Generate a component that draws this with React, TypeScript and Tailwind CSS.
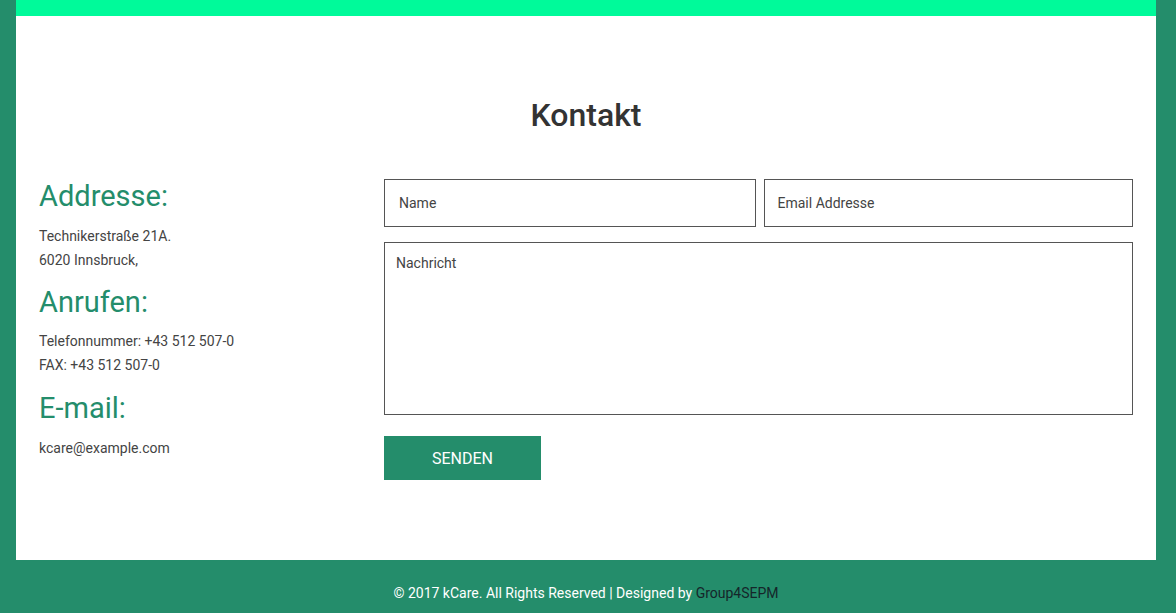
export default function App() {
  return (
    <div className="min-h-[613px] bg-[#248d6b] font-['Roboto',sans-serif] pl-4 pr-5">
      <div className="bg-white h-[560px]">
        <div className="h-4 bg-[#00fa9a]" />
        <h2 className="text-center text-[32px] font-medium text-[#333] pt-[79px] leading-[40px]">Kontakt</h2>
        <div className="flex px-[23px] pt-[43px]">
          {/* Kontaktdaten */}
          <div className="w-[345px] text-[#444] text-[14px] leading-[24px]">
            <h3 className="text-[29px] leading-[36px] text-[#248d6b] mb-[10px]">Addresse:</h3>
            <p>Technikerstraße 21A.</p>
            <p>6020 Innsbruck,</p>
            <h3 className="text-[29px] leading-[36px] text-[#248d6b] mt-[12px] mb-[9px]">Anrufen:</h3>
            <p>Telefonnummer: +43 512 507-0</p>
            <p>FAX: +43 512 507-0</p>
            <h3 className="text-[29px] leading-[36px] text-[#248d6b] mt-[13px] mb-[10px]">E-mail:</h3>
            <p>kcare@example.com</p>
          </div>
          {/* Formular */}
          <form className="flex-1 flex flex-col mt-[1px]">
            <div className="flex gap-[8px]">
              <input
                type="text"
                placeholder="Name"
                className="flex-1 h-[48px] border border-[#555] px-[14px] text-[14px] text-[#444] placeholder:text-[#444] outline-none"
              />
              <input
                type="email"
                placeholder="Email Addresse"
                className="flex-1 h-[48px] border border-[#555] px-[13px] text-[14px] text-[#444] placeholder:text-[#444] outline-none"
              />
            </div>
            <textarea
              placeholder="Nachricht"
              className="mt-[15px] h-[173px] border border-[#555] px-[11px] pt-[10px] pb-[11px] text-[14px] text-[#444] placeholder:text-[#444] outline-none resize-none"
            />
            <button
              type="button"
              className="mt-[21px] w-[157px] h-[44px] bg-[#248d6b] text-white text-[16px] uppercase pt-[2px]"
            >
              Senden
            </button>
          </form>
        </div>
      </div>
      <footer className="h-[53px] flex items-center justify-center pt-[14px] text-[14px] text-white">
        © 2017 kCare. All Rights Reserved | Designed by&nbsp;<span className="text-[#15262a]">Group4SEPM</span>
      </footer>
    </div>
  );
}
